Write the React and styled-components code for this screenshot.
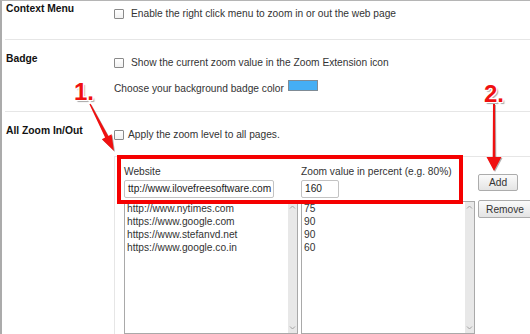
import React from 'react'
import styled, { createGlobalStyle } from 'styled-components'

const GlobalStyle = createGlobalStyle`
  html, body {
    margin: 0;
    padding: 0;
    background: #fff;
  }
  body {
    font-family: "Liberation Sans", Arial, sans-serif;
    font-size: 10.2px;
    color: #222;
  }
`

const Page = styled.div`
  position: relative;
  width: 530px;
  height: 334px;
  overflow: hidden;
`

const Frame = styled.div`
  height: 334px;
  box-sizing: border-box;
  border-left: 2px solid #ababab;
  border-top: 1px solid #b5b5b5;
`

const Section = styled.div`
  display: grid;
  grid-template-columns: 112px 1fr;
  height: ${({ h }) => h}px;
`

const Label = styled.div`
  font-weight: bold;
  font-size: 10.3px;
  line-height: 12px;
  color: #111;
  padding: ${({ top }) => top}px 0 0 4px;
`

const Content = styled.div`
  padding-top: ${({ top }) => top}px;
  display: flex;
  flex-direction: column;
  align-items: flex-start;
`

const Divider = styled.div`
  height: 1px;
  margin-left: 3px;
  background: #e6e6e6;
`

const CheckRow = styled.label`
  display: flex;
  align-items: center;
  gap: ${({ gap }) => gap}px;
  line-height: 12px;
  color: #333;
`

const Check = styled.span`
  width: 10px;
  height: 10px;
  box-sizing: border-box;
  border: 1px solid #8a8a8a;
  border-radius: 1px;
  background: linear-gradient(#fff, #f1f1f1);
`

const ColorRow = styled.div`
  display: flex;
  align-items: flex-end;
  gap: 4px;
  margin-top: 11px;
  line-height: 12px;
  color: #333;
`

const Swatch = styled.span`
  width: 30px;
  height: 11px;
  box-sizing: border-box;
  margin-bottom: 4px;
  background: #45aef4;
  border: 1px solid #7f8b95;
`

const Panel = styled.div`
  margin-top: 15px;
  align-self: stretch;
  border-top: 1px solid #e6e6e6;
  border-left: 1px solid #e6e6e6;
  padding: 9px 0 0 9px;
  display: grid;
  grid-template-columns: 174px 174px auto;
  column-gap: 3px;
  row-gap: 3px;
`

const Field = styled.div`
  display: flex;
  flex-direction: column;
  line-height: 12px;
  color: #333;
`

const TextInput = styled.div`
  width: ${({ w }) => w}px;
  height: 18px;
  margin-top: 2px;
  box-sizing: border-box;
  border: 1px solid #c3c3c3;
  border-radius: 2px;
  padding: 0 0 0 3px;
  line-height: 16px;
  color: #222;
  white-space: nowrap;
  overflow: hidden;
`

const Button = styled.div`
  width: ${({ w }) => w}px;
  height: ${({ h }) => h}px;
  margin-top: ${({ mt }) => mt}px;
  box-sizing: border-box;
  border: 1px solid #acacac;
  border-radius: 2px;
  background: linear-gradient(#fbfbfb, #e4e4e4);
  color: #333;
  display: flex;
  align-items: center;
  justify-content: center;
  align-self: start;
`

const List = styled.div`
  height: 133px;
  box-sizing: border-box;
  border: 1px solid #a9a9a9;
  display: flex;
  background: #fff;
`

const Items = styled.div`
  flex: 1;
  padding-left: 2px;
  line-height: 13px;
  color: #333;
`

const ScrollBar = styled.div`
  width: 9px;
  background: #e8e8e8;
  display: flex;
  flex-direction: column;
  justify-content: space-between;
  align-items: center;
  padding: 3px 0;
`

const Note = styled.div`
  position: absolute;
  left: ${({ x }) => x}px;
  top: ${({ y }) => y}px;
  font-family: "Liberation Sans", Arial, sans-serif;
  font-weight: bold;
  font-size: 24px;
  line-height: 24px;
  color: #f01010;
  text-shadow:
    -1px -1px 0 #fff, 1px -1px 0 #fff, -1px 1px 0 #fff, 1px 1px 0 #fff,
    0 -1px 0 #fff, 0 1px 0 #fff, -1px 0 0 #fff, 1px 0 0 #fff,
    2px 2px 1px rgba(0, 0, 0, 0.35);
`

const Highlight = styled.div`
  position: absolute;
  left: 117px;
  top: 155px;
  width: 346px;
  height: 49px;
  box-sizing: border-box;
  border: 4px solid #f50000;
`

const Arrows = styled.svg`
  position: absolute;
  left: 0;
  top: 0;
  filter: drop-shadow(1px 1px 0.5px rgba(0, 0, 0, 0.3));
`

const Chevron = ({ up }) => (
  <svg width="7" height="4" viewBox="0 0 7 4">
    <polyline
      points={up ? '1,3.5 3.5,1 6,3.5' : '1,0.5 3.5,3 6,0.5'}
      fill="none"
      stroke="#a2a2a2"
      strokeWidth="1"
    />
  </svg>
)

const ListBox = ({ items }) => (
  <List>
    <Items>
      {items.map((it, i) => <div key={i}>{it}</div>)}
    </Items>
    <ScrollBar>
      <Chevron up />
      <Chevron />
    </ScrollBar>
  </List>
)

const sites = [
  'http://www.nytimes.com',
  'https://www.google.com',
  'https://www.stefanvd.net',
  'https://www.google.co.in',
]
const values = ['75', '90', '90', '60']

export default function App() {
  return (
    <Page>
      <GlobalStyle />
      <Frame>
        <Section h={38}>
          <Label top={2}>Context Menu</Label>
          <Content top={7}>
            <CheckRow gap={7}><Check />Enable the right click menu to zoom in or out the web page</CheckRow>
          </Content>
        </Section>
        <Divider />
        <Section h={71}>
          <Label top={13}>Badge</Label>
          <Content top={17}>
            <CheckRow gap={7}><Check />Show the current zoom value in the Zoom Extension icon</CheckRow>
            <ColorRow>Choose your background badge color <Swatch /></ColorRow>
          </Content>
        </Section>
        <Divider />
        <Section h={222}>
          <Label top={13}>All Zoom In/Out</Label>
          <Content top={17}>
            <CheckRow gap={4}><Check />Apply the zoom level to all pages.</CheckRow>
            <Panel>
              <Field>
                Website
                <TextInput w={150}>ttp://www.ilovefreesoftware.com</TextInput>
              </Field>
              <Field>
                Zoom value in percent (e.g. 80%)
                <TextInput w={38}>160</TextInput>
              </Field>
              <Button w={40} h={17} mt={8}>Add</Button>
              <ListBox items={sites} />
              <ListBox items={values} />
              <Button w={54} h={18} mt={-1}>Remove</Button>
            </Panel>
          </Content>
        </Section>
      </Frame>

      <Highlight />
      <Arrows width="530" height="334" viewBox="0 0 530 334">
        <polygon
          points="89.4,104.3 90.6,103.7 108.3,136 111.6,134.3 114,151 101.8,139.3 105.1,137.6"
          fill="#f01010"
        />
        <polygon
          points="493,104 495,104 495.3,157 501.5,157 494,171 486.5,157 492.7,157"
          fill="#f01010"
        />
      </Arrows>
      <Note x={74} y={80}>1.</Note>
      <Note x={484} y={82}>2.</Note>
    </Page>
  )
}
